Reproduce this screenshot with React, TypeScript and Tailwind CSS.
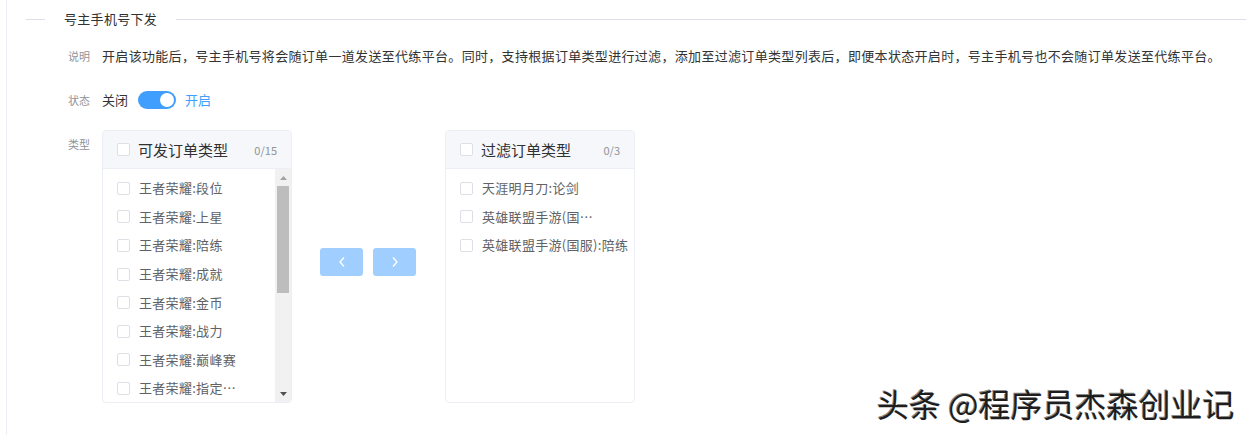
import React from "react";

const Box = () => (
  <span className="inline-block w-[13px] h-[13px] shrink-0 rounded-[2px] border border-[#dcdfe6] bg-white" />
);

const leftItems = [
  "王者荣耀:段位",
  "王者荣耀:上星",
  "王者荣耀:陪练",
  "王者荣耀:成就",
  "王者荣耀:金币",
  "王者荣耀:战力",
  "王者荣耀:巅峰赛",
  "王者荣耀:指定…",
];
const rightItems = ["天涯明月刀:论剑", "英雄联盟手游(国…", "英雄联盟手游(国服):陪练"];

function Panel({ title, count, items, scroll }: { title: string; count: string; items: string[]; scroll?: boolean }) {
  return (
    <div className="w-[190px] h-[273px] shrink-0 rounded-[4px] border border-[#ebeef5] bg-white flex flex-col overflow-hidden">
      <div className="h-[38px] shrink-0 bg-[#f5f7fa] border-b border-[#ebeef5] flex items-center pl-[14px] pr-[14px]">
        <Box />
        <span className="ml-[8px] text-[15px] leading-[20px] text-[#303133]">{title}</span>
        <span className="ml-auto text-[11px] leading-[14px] text-[#909399]">{count}</span>
      </div>
      <div className="flex-1 flex min-h-0">
        <div className="flex-1 pt-[5px] min-w-0">
          {items.map((t) => (
            <div key={t} className="h-[28.6px] flex items-center pl-[14px]">
              <Box />
              <span className="ml-[9px] text-[13px] leading-[16px] tracking-[0.3px] text-[#606266] whitespace-nowrap">{t}</span>
            </div>
          ))}
        </div>
        {scroll && (
          <div className="w-[16px] shrink-0 bg-[#f1f1f1] flex flex-col items-center">
            <div className="h-[17px] flex items-center justify-center">
              <svg width="7" height="4" viewBox="0 0 7 4"><path d="M0 4 L3.5 0 L7 4 Z" fill="#a3a3a3" /></svg>
            </div>
            <div className="w-[12px] h-[107px] bg-[#bdbdbd]" />
            <div className="flex-1" />
            <div className="h-[17px] flex items-center justify-center">
              <svg width="7" height="4" viewBox="0 0 7 4"><path d="M0 0 L3.5 4 L7 0 Z" fill="#505050" /></svg>
            </div>
          </div>
        )}
      </div>
    </div>
  );
}

export default function App() {
  return (
    <div className="relative w-[1246px] h-[435px] bg-white overflow-hidden [font-family:'Noto_Sans_CJK_SC','Noto_Sans',sans-serif]">
      <div className="ml-[6px] h-full border-l border-[#ebeef5]">
        {/* title */}
        <div className="pt-[9px] flex items-center h-[29px]">
          <div className="ml-[19px] w-[19px] h-px bg-[#dcdfe6]" />
          <span className="ml-[19px] text-[13px] leading-[20px] text-[#303133] tracking-[0.3px]">号主手机号下发</span>
          <div className="ml-[19px] flex-1 h-px bg-[#dcdfe6]" />
        </div>
        {/* description */}
        <div className="mt-[17px] flex items-center h-[20px]">
          <span className="ml-[61px] w-[34px] text-[11px] leading-[20px] text-[#909399]">说明</span>
          <span className="text-[13px] leading-[20px] text-[#333] tracking-[0.32px] whitespace-nowrap">
            开启该功能后，号主手机号将会随订单一道发送至代练平台。同时，支持根据订单类型进行过滤，添加至过滤订单类型列表后，即便本状态开启时，号主手机号也不会随订单发送至代练平台。
          </span>
        </div>
        {/* status */}
        <div className="mt-[24px] flex items-center h-[20px]">
          <span className="ml-[61px] w-[34px] text-[11px] leading-[20px] text-[#909399]">状态</span>
          <span className="text-[13px] leading-[20px] text-[#333]">关闭</span>
          <span className="ml-[10px] w-[38px] h-[18px] rounded-full bg-[#409eff] relative">
            <span className="absolute right-[2px] top-[2px] w-[14px] h-[14px] rounded-full bg-white" />
          </span>
          <span className="ml-[9px] text-[13px] leading-[20px] text-[#409eff]">开启</span>
        </div>
        {/* type */}
        <div className="mt-[20px] flex items-start">
          <span className="ml-[61px] w-[34px] mt-[4px] text-[11px] leading-[20px] text-[#909399]">类型</span>
          <Panel title="可发订单类型" count="0/15" items={leftItems} scroll />
          <div className="flex items-center gap-[10px] ml-[28px] mr-[29px] mt-[118px]">
            <button className="w-[43px] h-[28px] rounded-[3px] bg-[#a0cfff] flex items-center justify-center">
              <svg width="8" height="12" viewBox="0 0 8 12"><path d="M6 1.5 L2 6 L6 10.5" fill="none" stroke="#fff" strokeWidth="1.3" /></svg>
            </button>
            <button className="w-[43px] h-[28px] rounded-[3px] bg-[#a0cfff] flex items-center justify-center">
              <svg width="8" height="12" viewBox="0 0 8 12"><path d="M2 1.5 L6 6 L2 10.5" fill="none" stroke="#fff" strokeWidth="1.3" /></svg>
            </button>
          </div>
          <Panel title="过滤订单类型" count="0/3" items={rightItems} />
        </div>
      </div>
      <div className="absolute left-[877px] top-[384px] text-[32px] leading-[38px] text-[#1e1e1e] whitespace-nowrap [text-shadow:1px_1px_0_#ffffff,-1px_-1px_0_#888888]">
        头条 @程序员杰森创业记
      </div>
    </div>
  );
}
